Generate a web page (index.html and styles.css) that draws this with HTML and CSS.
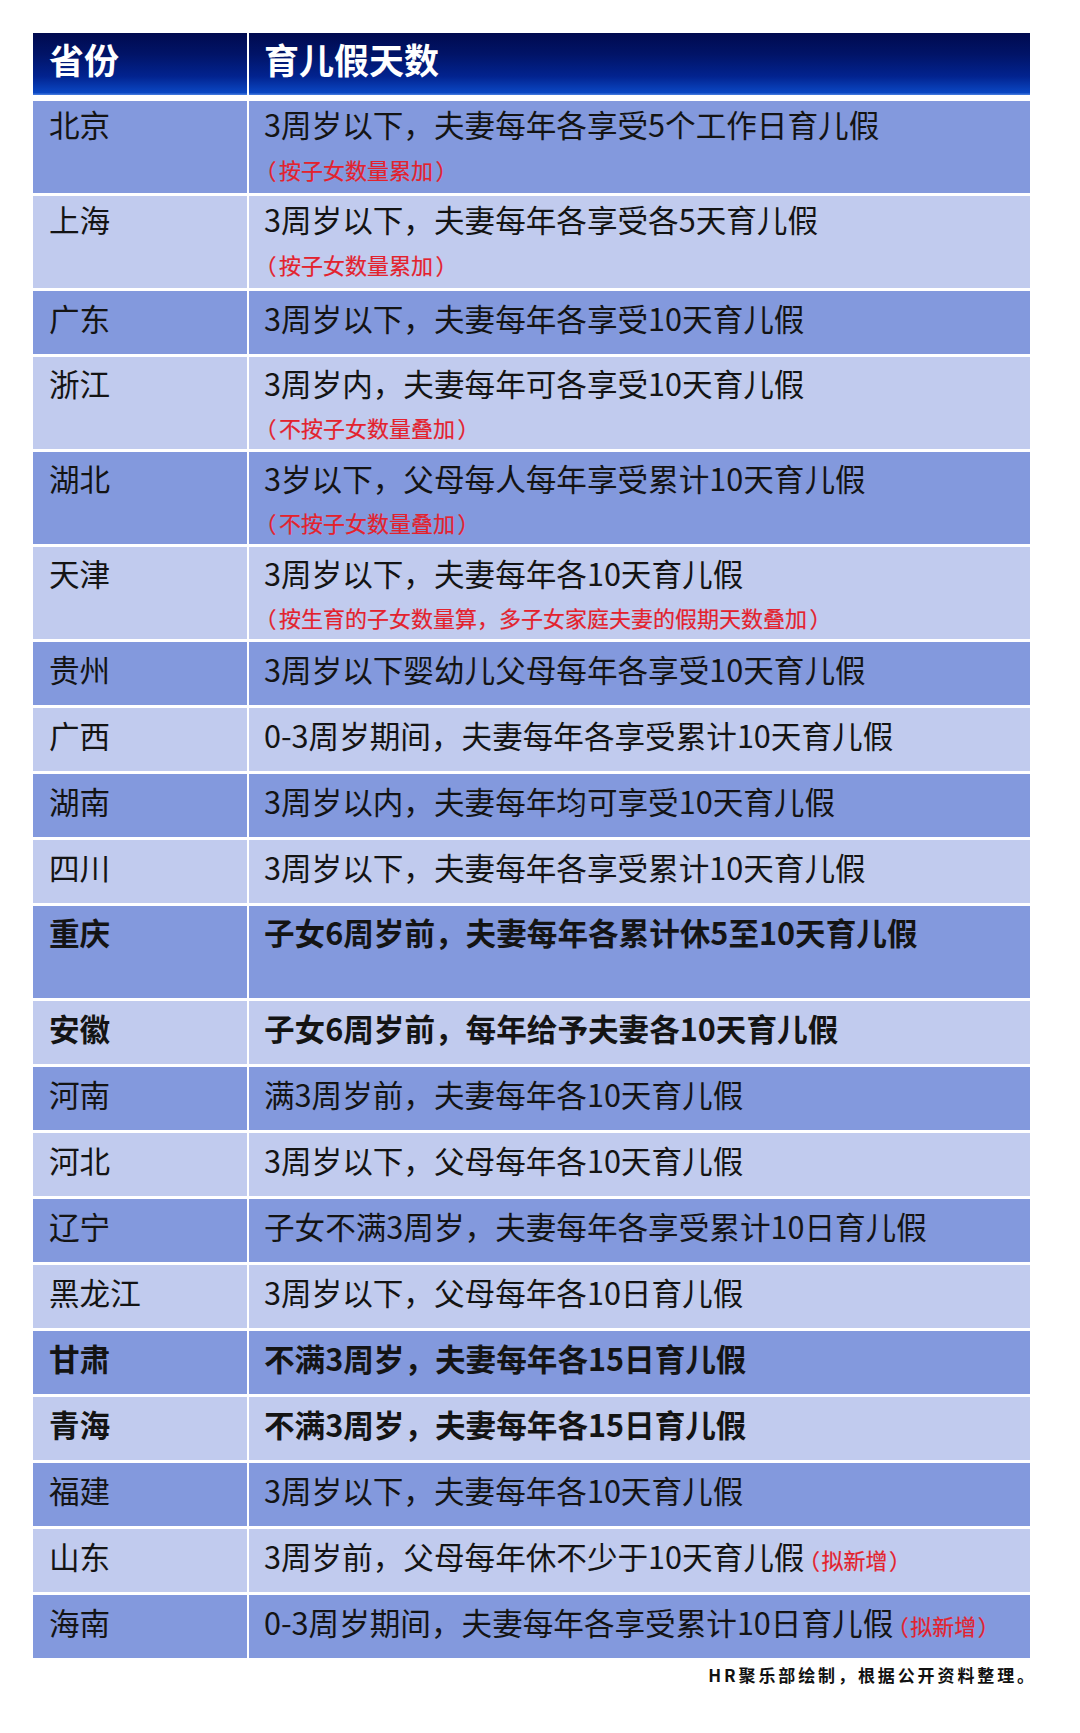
FILE: index.html
```html
<!DOCTYPE html>
<html lang="zh-CN">
<head>
<meta charset="utf-8">
<title>各省育儿假天数</title>
<link rel="stylesheet" href="styles.css">
</head>
<body>
<div class="page">
  <div class="table">
    <div class="row head">
      <div class="cell prov">省份</div>
      <div class="cell desc">育儿假天数</div>
    </div>
    <div class="row dark tall first">
      <div class="cell prov">北京</div>
      <div class="cell desc">3周岁以下，夫妻每年各享受5个工作日育儿假<span class="note"><span class="paren">（</span>按子女数量累加<span class="paren">）</span></span></div>
    </div>
    <div class="row light tall first">
      <div class="cell prov">上海</div>
      <div class="cell desc">3周岁以下，夫妻每年各享受各5天育儿假<span class="note"><span class="paren">（</span>按子女数量累加<span class="paren">）</span></span></div>
    </div>
    <div class="row dark">
      <div class="cell prov">广东</div>
      <div class="cell desc">3周岁以下，夫妻每年各享受10天育儿假</div>
    </div>
    <div class="row light tall">
      <div class="cell prov">浙江</div>
      <div class="cell desc">3周岁内，夫妻每年可各享受10天育儿假<span class="note"><span class="paren">（</span>不按子女数量叠加<span class="paren">）</span></span></div>
    </div>
    <div class="row dark tall">
      <div class="cell prov">湖北</div>
      <div class="cell desc">3岁以下，父母每人每年享受累计10天育儿假<span class="note"><span class="paren">（</span>不按子女数量叠加<span class="paren">）</span></span></div>
    </div>
    <div class="row light tall">
      <div class="cell prov">天津</div>
      <div class="cell desc">3周岁以下，夫妻每年各10天育儿假<span class="note"><span class="paren">（</span>按生育的子女数量算，多子女家庭夫妻的假期天数叠加<span class="paren">）</span></span></div>
    </div>
    <div class="row dark">
      <div class="cell prov">贵州</div>
      <div class="cell desc">3周岁以下婴幼儿父母每年各享受10天育儿假</div>
    </div>
    <div class="row light">
      <div class="cell prov">广西</div>
      <div class="cell desc">0-3周岁期间，夫妻每年各享受累计10天育儿假</div>
    </div>
    <div class="row dark">
      <div class="cell prov">湖南</div>
      <div class="cell desc">3周岁以内，夫妻每年均可享受10天育儿假</div>
    </div>
    <div class="row light">
      <div class="cell prov">四川</div>
      <div class="cell desc">3周岁以下，夫妻每年各享受累计10天育儿假</div>
    </div>
    <div class="row dark tall bold">
      <div class="cell prov">重庆</div>
      <div class="cell desc">子女6周岁前，夫妻每年各累计休5至10天育儿假</div>
    </div>
    <div class="row light bold">
      <div class="cell prov">安徽</div>
      <div class="cell desc">子女6周岁前，每年给予夫妻各10天育儿假</div>
    </div>
    <div class="row dark">
      <div class="cell prov">河南</div>
      <div class="cell desc">满3周岁前，夫妻每年各10天育儿假</div>
    </div>
    <div class="row light">
      <div class="cell prov">河北</div>
      <div class="cell desc">3周岁以下，父母每年各10天育儿假</div>
    </div>
    <div class="row dark">
      <div class="cell prov">辽宁</div>
      <div class="cell desc">子女不满3周岁，夫妻每年各享受累计10日育儿假</div>
    </div>
    <div class="row light">
      <div class="cell prov">黑龙江</div>
      <div class="cell desc">3周岁以下，父母每年各10日育儿假</div>
    </div>
    <div class="row dark bold">
      <div class="cell prov">甘肃</div>
      <div class="cell desc">不满3周岁，夫妻每年各15日育儿假</div>
    </div>
    <div class="row light bold">
      <div class="cell prov">青海</div>
      <div class="cell desc">不满3周岁，夫妻每年各15日育儿假</div>
    </div>
    <div class="row dark">
      <div class="cell prov">福建</div>
      <div class="cell desc">3周岁以下，夫妻每年各10天育儿假</div>
    </div>
    <div class="row light">
      <div class="cell prov">山东</div>
      <div class="cell desc">3周岁前，父母每年休不少于10天育儿假<span class="tag"><span class="paren">（</span>拟新增<span class="paren">）</span></span></div>
    </div>
    <div class="row dark">
      <div class="cell prov">海南</div>
      <div class="cell desc">0-3周岁期间，夫妻每年各享受累计10日育儿假<span class="tag"><span class="paren">（</span>拟新增<span class="paren">）</span></span></div>
    </div>
  </div>
  <p class="footer">HR聚乐部绘制，根据公开资料整理。</p>
</div>
</body>
</html>
```

FILE: styles.css
```css
html, body {
  margin: 0;
  padding: 0;
  background: #ffffff;
}

body {
  font-family: "Noto Sans CJK SC", "Noto Sans", sans-serif;
  color: #141414;
}

.page {
  padding: 33px 0 0 33px;
  width: 997px;
}

.table {
  display: flex;
  flex-direction: column;
  gap: 3px;
}

.row {
  display: grid;
  grid-template-columns: 214px 1fr;
  column-gap: 2px;
  height: 63px;
}

.row.tall {
  height: 92px;
}

.row.dark > .cell {
  background: #8399dd;
}

.row.light > .cell {
  background: #c1cbee;
}

.cell {
  padding-top: 9px;
  font-size: 30.6px;
  line-height: 36px;
  white-space: nowrap;
}

.row.tall > .cell {
  padding-top: 8px;
}

.row.tall.first > .cell {
  padding-top: 5px;
}

.prov {
  padding-left: 16px;
}

.desc {
  padding-left: 15px;
}

.row.bold .cell {
  font-weight: 700;
}

.note {
  display: block;
  margin-top: 12px;
  margin-left: -1px;
  font-size: 22px;
  line-height: 28px;
  color: #e3222d;
  -webkit-text-stroke: 0.2px #e3222d;
}

.row.first .note {
  margin-top: 13px;
}

.tag {
  margin-left: 3px;
  font-size: 22px;
  color: #e3222d;
  -webkit-text-stroke: 0.2px #e3222d;
}

.paren {
  font-feature-settings: "halt";
  padding: 0 2.5px;
}

.tag .paren {
  padding: 0 1.5px;
}

.row.head {
  height: 62px;
  margin-bottom: 3px;
}

.row.head > .cell {
  background: linear-gradient(180deg, #000a4f 0%, #011468 35%, #02238f 70%, #0a46c2 96%, #4a7fe0 100%);
  color: #ffffff;
  font-weight: 700;
  font-size: 35px;
  line-height: 42px;
  padding-top: 5px;
}

.footer {
  margin: 5px -7px 0 0;
  text-align: right;
  font-size: 17px;
  line-height: 24px;
  font-weight: 700;
  letter-spacing: 2.9px;
  color: #111111;
}
```
